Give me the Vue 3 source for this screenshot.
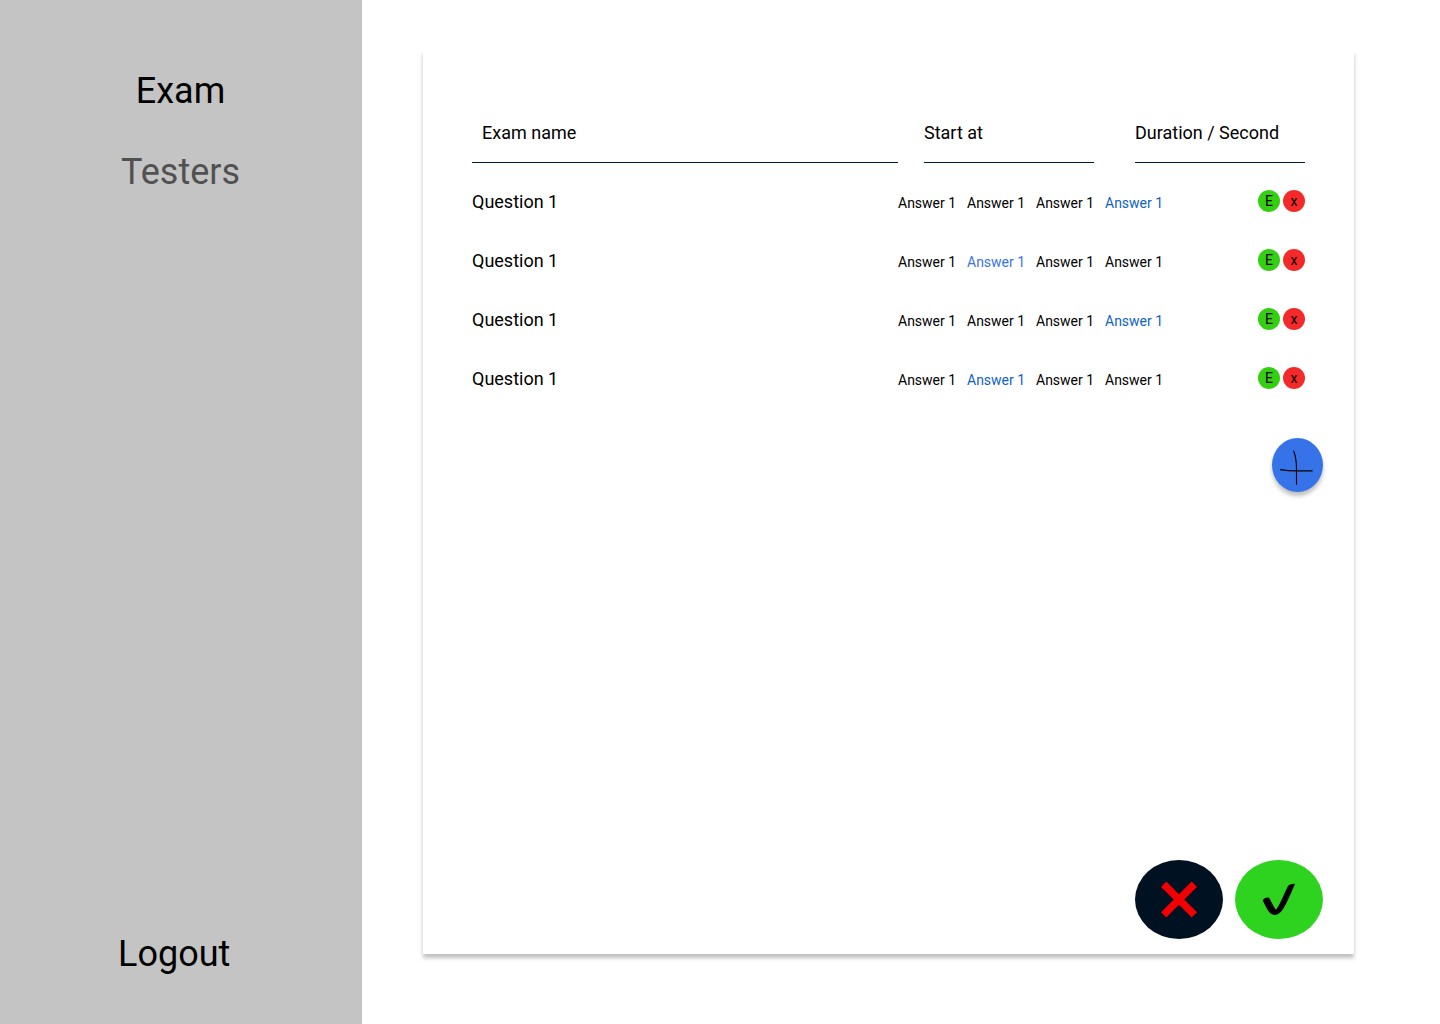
<script setup>
const questions = [
  { id: 1, correct: 4, tone: 'deep' },
  { id: 2, correct: 2, tone: 'light' },
  { id: 3, correct: 4, tone: 'deep' },
  { id: 4, correct: 2, tone: 'deep' },
]
</script>

<template>
  <div class="page">
    <aside class="sidebar">
      <nav class="nav">
        <a class="link">Exam</a>
        <a class="link muted">Testers</a>
      </nav>
      <a class="link logout">Logout</a>
    </aside>
    <main class="main">
      <section class="card">
        <header class="fields">
          <div class="field name">Exam name</div>
          <div class="field start">Start at</div>
          <div class="field duration">Duration / Second</div>
        </header>
        <div class="questions">
          <div v-for="q in questions" :key="q.id" class="row">
            <span class="question">Question 1</span>
            <div class="answers">
              <span v-for="n in 4" :key="n" class="answer" :class="n === q.correct ? q.tone : ''">Answer 1</span>
            </div>
            <div class="tools">
              <button class="tool edit">E</button>
              <button class="tool remove">x</button>
            </div>
          </div>
        </div>
        <button class="add" aria-label="Add question">
          <svg width="51" height="54" viewBox="0 0 51 54" fill="none" stroke="#000" stroke-width="1.1">
            <path d="M21.6 12.8C23.6 18 24.5 24 24.5 31V46.7" />
            <path d="M8 31.6C13 32.4 18 32.9 25 32.9H40.6" />
          </svg>
        </button>
        <footer class="actions">
          <button class="action cancel" aria-label="Cancel">
            <svg width="88" height="79" viewBox="0 0 88 79">
              <path d="M31.3 21.6L44 34.3L56.7 21.6L62 26.9L49.3 39.5L62 52.2L56.7 57.5L44 44.8L31.3 57.5L26 52.2L38.7 39.5L26 26.9Z" fill="#f00000" />
            </svg>
          </button>
          <button class="action confirm" aria-label="Confirm">
            <svg width="88" height="79" viewBox="0 0 88 79">
              <path d="M27.7 40.4C28.5 38.4 32 37 34 37.7C35.2 38.6 37.2 45 41 49.8C45.2 44.5 48.5 35 52.6 26.8C54 24 57 23.5 60.1 23.7C57.2 30.5 54 38.5 49 47.5C46.2 52.5 43.2 55 39.5 54.9C34.5 54.8 31.8 48.5 27.7 40.4Z" fill="#000" />
            </svg>
          </button>
        </footer>
      </section>
    </main>
  </div>
</template>

<style>
body { margin: 0; background: #fff; }
</style>

<style scoped>
.page {
  display: flex;
  width: 1440px;
  height: 1024px;
  background: #fff;
  color: #000;
  font-family: Roboto, sans-serif;
  overflow: hidden;
}
.sidebar {
  box-sizing: border-box;
  display: flex;
  flex-direction: column;
  justify-content: space-between;
  width: 362px;
  padding: 70px 0 49px;
  background: #c4c4c4;
}
.nav {
  display: flex;
  flex-direction: column;
  align-items: center;
  gap: 39px;
  padding-right: 1px;
}
.link {
  font-size: 36px;
  line-height: 42px;
}
.muted { color: #515151; }
.logout { margin-left: 118px; }
.main { padding: 50px 0 0 61px; }
.card {
  box-sizing: border-box;
  display: flex;
  flex-direction: column;
  width: 931px;
  height: 904px;
  padding: 72px 31px 15px 49px;
  background: #fff;
  box-shadow: 0 4px 4px rgba(0, 0, 0, 0.25);
}
.fields { display: flex; }
.field {
  box-sizing: border-box;
  height: 41px;
  border-bottom: 1px solid #001a38;
  font-size: 18px;
  line-height: 21px;
}
.name { width: 426px; padding-left: 10px; }
.start { width: 170px; margin-left: 26px; }
.duration { width: 170px; margin-left: 41px; }
.questions {
  display: flex;
  flex-direction: column;
  gap: 37px;
  width: 833px;
  margin-top: 27px;
}
.row {
  display: flex;
  align-items: center;
  height: 22px;
}
.question {
  width: 426px;
  padding-top: 2px;
  font-size: 18px;
  line-height: 22px;
}
.answers {
  display: flex;
  padding-top: 4px;
}
.answer {
  width: 69px;
  font-size: 14px;
  line-height: 16px;
}
.deep { color: #0f62c8; }
.light { color: #3874e8; }
.tools {
  display: flex;
  gap: 3px;
  margin-left: auto;
}
button {
  padding: 0;
  border: 0;
  border-radius: 50%;
  color: #000;
  font-family: inherit;
}
.tool {
  width: 22px;
  height: 22px;
  font-size: 14px;
  line-height: 22px;
  text-align: center;
}
.edit { background: #34cf12; }
.remove { background: #f42a2a; }
.add {
  align-self: flex-end;
  width: 51px;
  height: 54px;
  margin-top: 49px;
  background: #3673e8;
  box-shadow: 0 4px 4px rgba(0, 0, 0, 0.25);
}
.actions {
  display: flex;
  justify-content: flex-end;
  gap: 12px;
  margin-top: auto;
}
.action { width: 88px; height: 79px; }
.cancel { background: #001122; }
.confirm { background: #2dd31f; }
svg { display: block; }
</style>
